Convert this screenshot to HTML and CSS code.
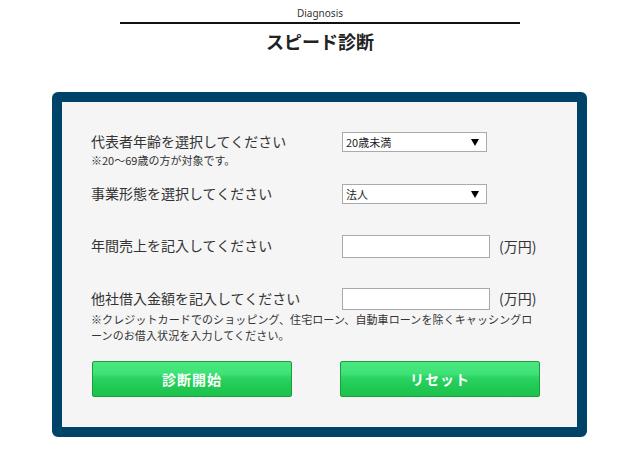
FILE: index.html
```html
<!DOCTYPE html>
<html lang="ja">

<head>
    <meta charset="UTF-8">
    <meta name="viewport" content="width=device-width, initial-scale=1.0">
    <title>スピード診断</title>
    <link rel="stylesheet" href="styles.css">
</head>

<body>

    <div class="header">
        <p class="header-en">Diagnosis</p>
        <h1>スピード診断</h1>
    </div>

    <form class="diagnosis">
        <div class="row">
            <label class="label" for="age">代表者年齢を選択してください</label>
            <div class="select-wrap">
                <select id="age">
                    <option>20歳未満</option>
                    <option>20〜29歳</option>
                    <option>30〜39歳</option>
                    <option>40〜49歳</option>
                    <option>50〜59歳</option>
                    <option>60〜69歳</option>
                </select>
                <svg class="arrow" width="8" height="7" viewBox="0 0 8 7"><path d="M0 0H8L4 7Z" fill="#000"/></svg>
            </div>
        </div>
        <p class="note note-age">※20〜69歳の方が対象です。</p>

        <div class="row row-type">
            <label class="label" for="type">事業形態を選択してください</label>
            <div class="select-wrap">
                <select id="type">
                    <option>法人</option>
                    <option>個人事業主</option>
                </select>
                <svg class="arrow" width="8" height="7" viewBox="0 0 8 7"><path d="M0 0H8L4 7Z" fill="#000"/></svg>
            </div>
        </div>

        <div class="row row-sales">
            <label class="label" for="sales">年間売上を記入してください</label>
            <input type="text" id="sales">
            <span class="unit">(万円)</span>
        </div>

        <div class="row row-debt">
            <label class="label" for="debt">他社借入金額を記入してください</label>
            <input type="text" id="debt">
            <span class="unit">(万円)</span>
        </div>
        <p class="note note-debt">※クレジットカードでのショッピング、住宅ローン、自動車ローンを除くキャッシングロ<br>ーンのお借入状況を入力してください。</p>

        <div class="buttons">
            <button type="button" class="btn">診断開始</button>
            <button type="reset" class="btn">リセット</button>
        </div>
    </form>

</body>

</html>
```

FILE: styles.css
```css
body {
    margin: 0;
    font-family: "Noto Sans CJK JP", "Noto Sans", sans-serif;
    color: #333;
    background: #fff;
}

.header {
    text-align: center;
    padding-top: 5px;
}

.header-en {
    width: 400px;
    margin: 0 auto;
    padding-bottom: 1px;
    border-bottom: 2px solid #111;
    font-family: "Noto Sans", sans-serif;
    font-size: 10px;
    line-height: 16px;
    color: #333;
}

.header h1 {
    margin: 5px 0 0;
    font-size: 18px;
    line-height: 24px;
    font-weight: bold;
    color: #222;
}

.diagnosis {
    width: 457px;
    margin: 39px 0 0 calc(50% - 268px);
    padding: 30px 29px;
    background: #f5f5f5;
    border: 10px solid #004368;
    border-radius: 6px;
}

.row {
    display: flex;
    align-items: center;
}

.label {
    width: 251px;
    flex-shrink: 0;
    margin-top: -3px;
    font-size: 14px;
    line-height: 20px;
}

.select-wrap {
    position: relative;
    width: 145px;
    height: 20px;
}

select {
    display: block;
    appearance: none;
    -webkit-appearance: none;
    width: 145px;
    height: 20px;
    margin: 0;
    padding: 0 16px 0 3px;
    border: 1px solid #aaa;
    border-radius: 0;
    background: #fff;
    font-family: "Noto Sans CJK JP", sans-serif;
    font-size: 11px;
    color: #222;
}

.arrow {
    position: absolute;
    right: 8px;
    top: 7px;
    pointer-events: none;
}

input {
    display: block;
    width: 148px;
    height: 23px;
    margin: 0;
    padding: 0 3px;
    box-sizing: border-box;
    border: 1px solid #a9a9a9;
    background: #fff;
    font-size: 14px;
}

.row-debt input {
    height: 22px;
}

.unit {
    margin-left: 9px;
    margin-top: -2px;
    font-size: 14px;
    line-height: 20px;
}

.note {
    margin: 0;
    font-size: 11px;
    line-height: 16px;
}

.note-age {
    margin-top: 0;
}

.row-type {
    margin-top: 16px;
}

.row-sales {
    margin-top: 31px;
}

.row-debt {
    margin-top: 30px;
}

.note-debt {
    margin-top: 1px;
    letter-spacing: 0.1px;
    white-space: nowrap;
}

.buttons {
    display: flex;
    gap: 48px;
    margin-top: 18px;
    padding-left: 1px;
}

.btn {
    width: 200px;
    height: 36px;
    margin: 0;
    padding: 0;
    border: 1px solid #1b9c41;
    border-radius: 2px;
    background: linear-gradient(#4ae77f 0%, #3fe276 35%, #2bd463 45%, #22cb55 70%, #1bc24b 100%);
    color: #fff;
    font-family: "Noto Sans CJK JP", sans-serif;
    font-size: 14px;
    font-weight: bold;
    letter-spacing: 1px;
    cursor: pointer;
}

.btn:hover {
    background: #1bc24b;
}
```
